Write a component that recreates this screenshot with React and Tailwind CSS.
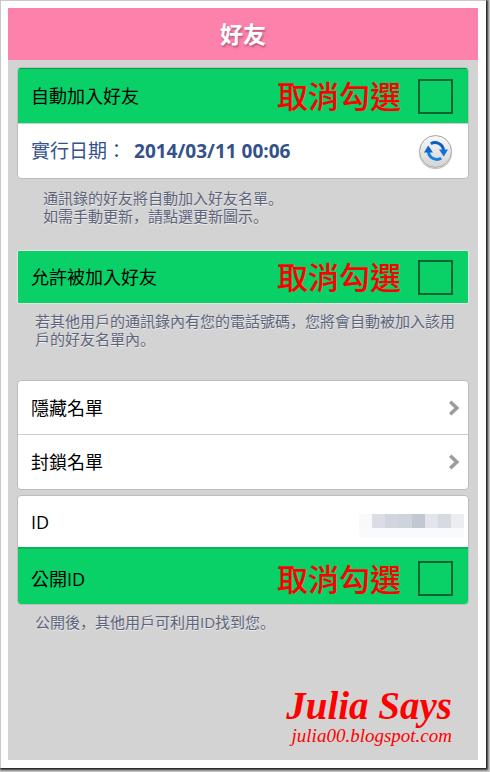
import { useState } from "react";

const idBlocks = [
  "bg-[#f8f9fb]",
  "bg-[#dadee4]",
  "bg-[#d1d5de]",
  "bg-[#ced3dc]",
  "bg-[#c1c8d1]",
  "bg-[#e2e5ea]",
  "bg-[#d6dae1]",
  "bg-[#ecedf1]",
];

function CheckRow({ id, label, className }) {
  const [checked, setChecked] = useState(false);

  return (
    <div
      className={`flex items-center bg-[#0ad167] pl-[13px] pr-[15px] ${className}`}
    >
      <label htmlFor={id} className="flex-1 text-[18px] leading-6">
        {label}
      </label>

      <span className="mr-[17px] text-[31px] font-medium leading-9 text-[#ff0000]">
        取消勾選
      </span>

      <input
        id={id}
        type="checkbox"
        checked={checked}
        onChange={() => setChecked(!checked)}
        className="size-[35px] appearance-none border-2 border-[#076332] checked:bg-[#076332]"
      />
    </div>
  );
}

function LinkRow({ label, className }) {
  return (
    <a
      href="#"
      className={`flex items-center justify-between pl-[13px] pr-2 text-[18px] leading-6 ${className}`}
    >
      {label}
      <svg viewBox="0 0 12 16" className="h-4 w-3" fill="none">
        <path
          d="M2.2 1.8 L8.8 8 L2.2 14.2"
          stroke="#9c9c9c"
          strokeWidth="3.6"
        />
      </svg>
    </a>
  );
}

function Note({ children, className }) {
  return (
    <p
      className={`font-['Open_Sans','Noto_Sans_CJK_SC',sans-serif] text-[15px] leading-[18px] text-[#5c637b] [text-shadow:0_1px_0_#ececec] ${className}`}
    >
      {children}
    </p>
  );
}

function RefreshButton() {
  return (
    <button
      type="button"
      aria-label="更新"
      className="flex size-[33px] items-center justify-center rounded-full border border-[#a3a3a3] bg-linear-to-b from-[#f8f8f8] to-[#d4d4d4] shadow-[0_1px_1px_#bbbbbb]"
    >
      <svg viewBox="0 0 24 24" className="size-6" fill="none">
        <path
          d="M6.8 4.8 A8.6 8.6 0 0 1 19.6 11"
          stroke="#0b5fc0"
          strokeWidth="3"
        />
        <path
          d="M17.2 19.2 A8.6 8.6 0 0 1 4.4 13"
          stroke="#1480e4"
          strokeWidth="3"
        />
        <path d="M15 10.6 H24 L19.8 17.6 Z" fill="#1173d8" />
        <path d="M0 13.4 H9 L4.2 6.4 Z" fill="#0b68cc" />
      </svg>
    </button>
  );
}

function App() {
  return (
    <div className="flex min-h-screen flex-col bg-[#d0d0d0] pb-1 pr-1 font-['Open_Sans','Noto_Sans_CJK_TC',sans-serif] text-black">

      <div className="flex flex-1 flex-col border-l border-t border-[#c8c8c8] bg-white pb-2 pl-[7px] pr-2 pt-[7px] shadow-[1px_1px_2px_1px_#222222]">

        <div className="flex flex-1 flex-col bg-[#d3d3d3]">

          <header className="flex h-[52px] items-center justify-center bg-[#fc81ab]">
            <h1 className="text-[23px] font-bold leading-8 text-white [text-shadow:1px_2px_2px_#b95f80]">
              好友
            </h1>
          </header>

          <main className="px-[9px] pt-[7px]">

            <section className="overflow-hidden rounded-[4px] border border-[#bcbcbc] bg-white">
              <CheckRow
                id="auto-add"
                label="自動加入好友"
                className="h-[55px] border-t border-[#0a9c50]"
              />
              <div className="flex h-[55px] items-center justify-between border-t border-[#cfcfcf] pl-[13px] pr-4">
                <p className="flex gap-2 text-[19px] leading-6 text-[#34528a]">
                  <span>實行日期：</span>
                  <b>2014/03/11 00:06</b>
                </p>
                <RefreshButton />
              </div>
            </section>

            <Note className="pl-[26px] pt-[10px]">
              通訊錄的好友將自動加入好友名單。
              <br />
              如需手動更新，請點選更新圖示。
            </Note>

            <section className="mt-[25px] overflow-hidden rounded-[2px] border border-[#e2e2e2]">
              <CheckRow
                id="allow-add"
                label="允許被加入好友"
                className="h-[52px]"
              />
            </section>

            <Note className="pl-[18px] pt-2">
              若其他用戶的通訊錄內有您的電話號碼，您將會自動被加入該用戶的好友名單內。
            </Note>

            <section className="mt-8 overflow-hidden rounded-[4px] border border-[#bcbcbc] bg-white">
              <LinkRow label="隱藏名單" className="h-[53px]" />
              <LinkRow
                label="封鎖名單"
                className="h-[55px] border-t border-[#cfcfcf]"
              />
            </section>

            <section className="mt-[5px] overflow-hidden rounded-[4px] border border-[#bcbcbc] bg-white">
              <div className="flex h-[51px] items-center justify-between pl-[13px] pr-1">
                <span className="text-[18px] leading-6">ID</span>
                <div className="mt-2 w-[105px]">
                  <div className="flex h-[14px]">
                    {idBlocks.map((color, index) => (
                      <div key={index} className={`flex-1 ${color}`} />
                    ))}
                  </div>
                  <div className="h-[10px] bg-[#f9fafc]" />
                </div>
              </div>
              <CheckRow
                id="public-id"
                label="公開ID"
                className="h-[57px] border-t-2 border-[#0ab259] pt-1"
              />
            </section>

            <Note className="pl-[18px] pt-2">
              公開後，其他用戶可利用ID找到您。
            </Note>

          </main>

          <footer className="mt-auto flex flex-col items-end pb-[14px] pr-[26px] text-[#ff0000]">
            <p className="font-['Liberation_Serif',serif] text-[39px] font-bold italic leading-10">
              Julia Says
            </p>
            <a
              href="#"
              className="font-['Liberation_Serif',serif] text-[19px] italic leading-5"
            >
              julia00.blogspot.com
            </a>
          </footer>

        </div>
      </div>
    </div>
  );
}

export default App;
